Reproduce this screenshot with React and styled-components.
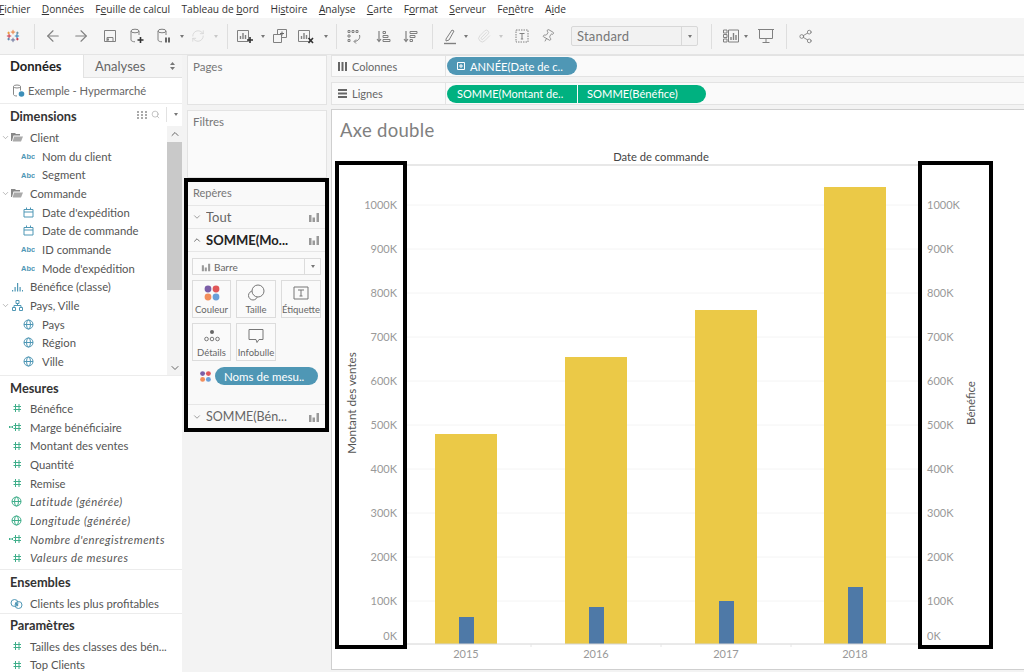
import React from "react";
import styled, { createGlobalStyle } from "styled-components";
import { ArrowLeft, ArrowRight, ChevronDown, ChevronUp, Search, Pin, Paperclip, Share2, RefreshCw } from "lucide-react";

const BOOK = `"Lato", "Open Sans", sans-serif`;

const GlobalStyle = createGlobalStyle`
  html, body { margin: 0; padding: 0; height: 100%; overflow: hidden; background: #f3f3f3; }
  * { box-sizing: border-box; }
  body { font-family: ${BOOK}; color: #555; }
`;

const menus = [
  ["F", "ichier"],
  ["D", "onnées"],
  ["Fe", "uille de calcul", 1],
  ["Tableau de ", "bord", 2],
  ["His", "toire", 1],
  ["A", "nalyse"],
  ["C", "arte"],
  ["Fo", "rmat", 1],
  ["S", "erveur"],
  ["Fen", "être", 1],
  ["Ai", "de", 1],
];

const Page = styled.div`
  width: 1024px;
  height: 672px;
  overflow: hidden;
  display: flex;
  flex-direction: column;
`;

const MenuBar = styled.div`
  height: 18px;
  background: #fff;
  display: flex;
  align-items: center;
  gap: 11.3px;
  font-family: "Open Sans", sans-serif;
  font-size: 10.2px;
  color: #333;
  margin-left: -1px;
  flex: none;
`;

const MenuItem = styled.span`
  white-space: pre;
  u { text-decoration-thickness: 1px; text-underline-offset: 1px; }
`;

const Toolbar = styled.div`
  height: 37px;
  background: #f5f5f5;
  border-bottom: 1px solid #e4e4e4;
  display: flex;
  align-items: center;
  flex: none;
`;

const Tool = styled.div`
  width: ${(p) => p.$w || 20}px;
  height: 20px;
  margin-left: ${(p) => p.$ml}px;
  display: flex;
  align-items: center;
  justify-content: center;
  color: ${(p) => (p.$off ? "#d2d2d2" : "#808080")};
  flex: none;
`;

const ToolSep = styled.div`
  width: 1px;
  height: 25px;
  margin-left: ${(p) => p.$ml}px;
  background: #dedede;
  flex: none;
`;

const Caret = styled.div`
  width: 0;
  height: 0;
  border-left: 2.5px solid transparent;
  border-right: 2.5px solid transparent;
  border-top: 3px solid ${(p) => (p.$off ? "#c8c8c8" : "#777")};
`;

const Select = styled.div`
  width: 127px;
  height: 20px;
  margin-left: 13px;
  display: flex;
  align-items: center;
  border: 1px solid #d8d8d8;
  border-radius: 2px;
  background: #f2f2f2;
  flex: none;
  font-size: 13px;
  color: #777;
  letter-spacing: 0.2px;
  span { flex: 1; padding-left: 5px; }
  i {
    width: 16px;
    height: 100%;
    border-left: 1px solid #d8d8d8;
    display: flex;
    align-items: center;
    justify-content: center;
  }
`;

const Main = styled.div`
  flex: 1;
  display: flex;
  min-height: 0;
  background: #f3f3f3;
`;

const DataPane = styled.div`
  width: 182px;
  flex: none;
  background: #fff;
  display: flex;
  flex-direction: column;
  overflow: hidden;
`;

const Tabs = styled.div`
  height: 23px;
  display: flex;
  flex: none;
`;

const Tab = styled.div`
  width: ${(p) => p.$w}px;
  display: flex;
  align-items: center;
  padding-left: ${(p) => p.$pad}px;
  padding-bottom: 1px;
  font-size: 13px;
  font-weight: ${(p) => (p.$on ? 700 : 400)};
  color: ${(p) => (p.$on ? "#222" : "#666")};
  background: ${(p) => (p.$on ? "#fff" : "#f5f5f5")};
  border-left: ${(p) => (p.$on ? "none" : "1px solid #e2e2e2")};
  border-bottom: ${(p) => (p.$on ? "none" : "1px solid #e2e2e2")};
  position: relative;
`;

const TabArrows = styled.svg`
  position: absolute;
  right: 7px;
  top: 7px;
`;

const Source = styled.div`
  height: 26px;
  display: flex;
  align-items: center;
  gap: 3px;
  padding-left: 12px;
  font-size: 11.2px;
  color: #666;
  border-bottom: 1px solid #ececec;
  flex: none;
`;

const SectionTitle = styled.div`
  height: ${(p) => p.$h || 23}px;
  padding-left: 10px;
  display: flex;
  align-items: center;
  font-size: 12.8px;
  font-weight: 700;
  color: #333;
  flex: none;
  position: relative;
`;

const HeadTools = styled.div`
  position: absolute;
  right: 4px;
  top: 3px;
  display: flex;
  align-items: center;
  gap: 4px;
  color: #999;
  em { width: 1px; height: 15px; background: #e2e2e2; margin: 0 3px 0 2px; }
`;

const ScrollWrap = styled.div`
  height: 249px;
  display: flex;
  flex: none;
  border-bottom: 1px solid #ececec;
`;

const RowList = styled.div`
  flex: 1;
  padding-top: 1px;
`;

const Row = styled.div`
  height: 18.7px;
  display: flex;
  align-items: center;
  padding-left: ${(p) => p.$pad}px;
  font-size: 11.3px;
  letter-spacing: ${(p) => (p.$it ? "0.5px" : "0")};
  color: #555;
  font-style: ${(p) => (p.$it ? "italic" : "normal")};
  white-space: nowrap;
  flex: none;
`;

const RowIcon = styled.span`
  width: 14px;
  display: flex;
  justify-content: center;
  align-items: center;
  margin-right: ${(p) => p.$gap || 7}px;
  flex: none;
  color: ${(p) => p.$c || "#4f97b5"};
`;

const Fold = styled.span`
  width: 12px;
  margin-right: -2px;
  padding-left: 1px;
  display: flex;
  color: #888;
`;

const Scrollbar = styled.div`
  width: 15px;
  margin-top: -1px;
  background: #f3f3f3;
  display: flex;
  flex-direction: column;
  align-items: center;
  color: #666;
`;

const Thumb = styled.div`
  width: 100%;
  height: 148px;
  background: #c9c9c9;
  margin: 2px 0 auto;
`;

const Section = styled.div`
  border-bottom: ${(p) => (p.$line ? "1px solid #ececec" : "none")};
  padding-bottom: ${(p) => p.$pb || 0}px;
  flex: none;
`;

const Mid = styled.div`
  width: 149px;
  flex: none;
  padding: 0 4px 0 5px;
  display: flex;
  flex-direction: column;
`;

const Card = styled.div`
  height: ${(p) => p.$h}px;
  margin-bottom: ${(p) => p.$mb}px;
  background: #fafafa;
  border: 1px solid #e3e3e3;
  padding: 4px 5px;
  font-size: 11.5px;
  color: #777;
  flex: none;
`;

const Marks = styled.div`
  height: 254px;
  margin: 0 -2px 0 -3px;
  border: 4px solid #000;
  background: #f9f9f9;
  flex: none;
  display: flex;
  flex-direction: column;
`;

const MarksTitle = styled.div`
  height: 24px;
  padding: 4px 0 0 5px;
  font-size: 11px;
  color: #777;
  border-bottom: 1px solid #e6e6e6;
  flex: none;
`;

const MarkRow = styled.div`
  height: 23px;
  display: flex;
  align-items: center;
  padding: 0 5px 0 4px;
  gap: 4px;
  font-size: ${(p) => (p.$small ? 12.5 : 13)}px;
  font-weight: ${(p) => (p.$bold ? 700 : 400)};
  color: ${(p) => (p.$bold ? "#222" : "#666")};
  border-bottom: ${(p) => (p.$line ? "1px solid #e6e6e6" : "none")};
  flex: none;
  span { flex: 1; white-space: nowrap; overflow: hidden; }
  svg { flex: none; }
`;

const MarkBody = styled.div`
  flex: 1;
  padding: 6px 4px 0 4px;
  border-bottom: 1px solid #e6e6e6;
`;

const TypeSelect = styled.div`
  height: 17px;
  display: flex;
  align-items: center;
  border: 1px solid #dcdcdc;
  background: #fbfbfb;
  font-size: 10px;
  color: #666;
  padding-left: 8px;
  gap: 3px;
  span { flex: 1; }
  i {
    width: 16px;
    height: 100%;
    border-left: 1px solid #dcdcdc;
    display: flex;
    align-items: center;
    justify-content: center;
  }
`;

const MarkGrid = styled.div`
  display: grid;
  grid-template-columns: 39px 40px 40px;
  column-gap: 5px;
  row-gap: 5px;
  margin-top: 5px;
`;

const MarkBtn = styled.div`
  height: 38px;
  border: 1px solid #dcdcdc;
  background: #fafafa;
  display: flex;
  flex-direction: column;
  align-items: center;
  justify-content: flex-end;
  gap: 2px;
  padding-bottom: 2px;
  font-size: 9.5px;
  color: #666;
  white-space: nowrap;
`;

const PillRow = styled.div`
  display: flex;
  align-items: center;
  gap: 3px;
  margin: 6px 0 0 7px;
`;

const Pill = styled.div`
  width: ${(p) => p.$w}px;
  height: 18px;
  background: ${(p) => p.$c};
  color: #fff;
  font-size: ${(p) => p.$fs || 11.2}px;
  display: flex;
  align-items: center;
  gap: 5px;
  padding-left: ${(p) => p.$pad || 0}px;
  white-space: nowrap;
  border-radius: ${(p) => p.$r || "9px"};
  flex: none;
`;

const Work = styled.div`
  flex: 1;
  min-width: 0;
  display: flex;
  flex-direction: column;
`;

const Shelf = styled.div`
  height: ${(p) => p.$h}px;
  margin-bottom: ${(p) => p.$mb}px;
  display: flex;
  align-items: center;
  background: #fafafa;
  border-top: 1px solid #e3e3e3;
  border-bottom: 1px solid #e3e3e3;
  border-left: 1px solid #e3e3e3;
  flex: none;
`;

const ShelfLabel = styled.div`
  width: 114px;
  height: 100%;
  display: flex;
  align-items: center;
  gap: 5px;
  padding-left: 6px;
  font-size: 11px;
  color: #666;
  border-right: 1px solid #e3e3e3;
  margin-right: 1px;
  flex: none;
`;

const PillGroup = styled.div`
  display: flex;
  gap: 1px;
`;

const Viz = styled.div`
  flex: 1;
  margin-bottom: 2px;
  background: #fff;
  border: 1px solid #cfcfcf;
  border-right: none;
  position: relative;
  display: flex;
  flex-direction: column;
`;

const VizTitle = styled.div`
  height: 40px;
  padding: 9px 0 0 8px;
  font-size: 18.5px;
  color: #808080;
  letter-spacing: 0.3px;
  flex: none;
`;

const Chart = styled.svg`
  flex: 1;
  width: 692px;
  display: block;
  text { font-family: ${BOOK}; }
`;

const AxisMark = styled.div`
  position: absolute;
  top: 51px;
  left: ${(p) => p.$left}px;
  width: ${(p) => p.$w}px;
  height: 488px;
  border: 4px solid #000;
  pointer-events: none;
`;

/* ---- petits pictos ---- */

const Logo = () => (
  <svg width="14" height="14" viewBox="0 0 16 16" strokeWidth="1">
    <path d="M8 1v5M5.500 3.500h5" stroke="#e8762b" />
    <path d="M8 10v5M5.500 12.500h5" stroke="#5b6591" />
    <path d="M1 8h5M3.500 5.500v5" stroke="#c72035" />
    <path d="M10 8h5M12.500 5.500v5" stroke="#1f77b4" />
    <path d="M3 3v3M1.500 4.500h3" stroke="#eb912b" />
    <path d="M13 3v3M11.500 4.500h3" stroke="#5b879b" />
    <path d="M3 10v3M1.500 11.500h3" stroke="#4e79a7" />
    <path d="M13 10v3M11.500 11.500h3" stroke="#c72035" />
  </svg>
);

const Save = () => (
  <svg width="14" height="14" viewBox="0 0 14 14" fill="none" stroke="currentColor">
    <path d="M1.500 1.500h11v11h-11z" />
    <path d="M4 12.500v-4h6v4" />
    <path d="M4 10.500h2" strokeWidth="2" />
  </svg>
);

const Db = ({ kind }) => (
  <svg width="16" height="17" viewBox="0 0 16 17" fill="none" stroke="currentColor">
    <ellipse cx="6" cy="3" rx="4" ry="1.800" />
    <path d="M2 3v9c0 1 2 1.800 4 1.800M10 3v4" />
    {kind === "new" && <path d="M11.500 9v6M8.500 12h6" stroke="#333" strokeWidth="1.600" />}
    {kind === "pause" && <path d="M10 9.500v5M13 9.500v5" stroke="#666" strokeWidth="2" />}
  </svg>
);

const Bars = ({ w = 12, h = 12, c = "currentColor" }) => (
  <svg width={w} height={h} viewBox="0 0 12 12" fill={c}>
    <path d="M1 4h2.500v7H1zM4.500 6.500H7V11H4.500zM8.500 2H11v9H8.500z" />
  </svg>
);

const Sheet = ({ kind }) => (
  <svg width="18" height="17" viewBox="0 0 18 17" fill="none" stroke="currentColor">
    <path d="M1.500 2.500h11v11h-11z" />
    <path d="M4.500 11V8M7 11V5M9.500 11V7" strokeWidth="1.400" />
    {kind === "new" && <path d="M14 9v6M11 12h6" stroke="#333" strokeWidth="1.600" />}
    {kind === "clear" && <path d="M11.500 10l4.500 5M16 10l-4.500 5" stroke="#333" strokeWidth="1.600" />}
  </svg>
);

const Dup = () => (
  <svg width="16" height="16" viewBox="0 0 16 16" fill="none" stroke="currentColor">
    <path d="M1.500 6.500h8v8h-8zM5.500 6V1.500h9v8H10" />
    <path d="M10 3.500v4M8 5.500h4" stroke="#666" />
  </svg>
);

const Swap = () => (
  <svg width="15" height="15" viewBox="0 0 15 15" fill="none" stroke="currentColor">
    <path d="M1 1.500h2v2H1zM5 1.500h2v2H5zM9 1.500h2v2H9zM1 6h2v2H1zM1 10.500h2v2H1z" />
    <path d="M12.500 6c1 3-1 6-5 6.500M9 10.500l-2 2 2 2" />
  </svg>
);

const Sort = ({ desc }) => (
  <svg width="15" height="15" viewBox="0 0 15 15" fill="none" stroke="currentColor">
    <path d="M3 2v10M1 10l2 2.500L5 10" strokeWidth="1.200" />
    {desc ? <path d="M7 2.500h7v2H7zM7 6.500h5v2H7zM7 10.500h2.500v2H7z" /> : <path d="M7 2.500h2.500v2H7zM7 6.500h5v2H7zM7 10.500h7v2H7z" />}
  </svg>
);

const Marker = () => (
  <svg width="16" height="17" viewBox="0 0 16 17" fill="none" stroke="currentColor">
    <path d="M4 11l6-9 2 1-5 9-3 1z" />
    <path d="M2 15.500h12" strokeWidth="1.400" />
  </svg>
);

const TextBox = ({ size = 14 }) => (
  <svg width={size} height={size} viewBox="0 0 14 14" fill="none" stroke="currentColor">
    <path d="M1 1h12v12H1z" strokeDasharray="1.500 1" />
    <path d="M4.500 4.500h5M7 4.500v5.500M5.800 10h2.400" />
  </svg>
);

const ShowMe = () => (
  <svg width="16" height="14" viewBox="0 0 16 14" fill="none" stroke="currentColor">
    <path d="M.5 1h3.500v3H.5zM.5 5.500h3.500v3H.5zM.5 10h3.500v3H.5zM5.500 1h10v12h-10z" />
    <path d="M8 11V8M10.500 11V4M13 11V6" strokeWidth="1.400" />
  </svg>
);

const Screen = () => (
  <svg width="18" height="16" viewBox="0 0 18 16" fill="none" stroke="currentColor">
    <path d="M1 1.500h16M2.500 1.500v9h13v-9M9 10.500v4M5.500 14.500h7" />
  </svg>
);

const TiltPin = styled(Pin)`
  transform: rotate(30deg);
`;

const DataDot = () => (
  <svg width="13" height="14" viewBox="0 0 13 14" fill="none" stroke="#888">
    <ellipse cx="5" cy="2.500" rx="3.500" ry="1.500" />
    <path d="M1.500 2.500v8c0 .8 1.500 1.500 3.500 1.500M8.500 2.500v4" />
    <circle cx="9.500" cy="10" r="2.800" fill="#3d8fb8" stroke="none" />
  </svg>
);

const FolderOpen = () => (
  <svg width="12" height="10" viewBox="0 0 12 10" fill="#888">
    <path d="M0 1h4l1 1h4v1.500H2.500L1 9H0z" />
    <path d="M3 4.500h9L10 9.500H1.700z" fill="#aaa" />
  </svg>
);

const Abc = () => (
  <svg width="14" height="8" viewBox="0 0 14 8">
    <text x="0" y="7" fontSize="7.500" fontFamily="Liberation Sans, sans-serif" fontWeight="700" fill="#4f97b5">Abc</text>
  </svg>
);

const Cal = () => (
  <svg width="11" height="11" viewBox="0 0 11 11" fill="none" stroke="#4f97b5">
    <path d="M1 2.500h9v7.500H1zM1 5h9" />
    <path d="M3.500 .500v2M7.500 .500v2" />
  </svg>
);

const Globe = ({ c = "#4f97b5" }) => (
  <svg width="11" height="11" viewBox="0 0 11 11" fill="none" stroke={c}>
    <circle cx="5.500" cy="5.500" r="4.500" />
    <path d="M1 5.500h9" />
    <ellipse cx="5.500" cy="5.500" rx="2" ry="4.500" />
  </svg>
);

const Bins = () => (
  <svg width="12" height="10" viewBox="0 0 12 10" fill="#4f97b5">
    <path d="M1 8h1.200v1.500H1zM3.500 5h1.200v4.500H3.500zM6 1h1.200v8.500H6zM8.500 5h1.200v4.500H8.500zM11 8h1v1.500h-1z" />
  </svg>
);

const Hier = () => (
  <svg width="11" height="11" viewBox="0 0 11 11" fill="none" stroke="#4f97b5">
    <path d="M4 .500h3v3H4zM.500 7.500h3v3h-3zM7.500 7.500h3v3h-3zM5.500 3.500v2M2 7.500v-2h7v2" />
  </svg>
);

const Hash = ({ bin }) => (
  <svg width="14" height="10" viewBox="0 0 14 10" fill="none" stroke="#3fae8a">
    <path d="M6.500 1v8M10 1v8M4.500 3.500h7.500M4.500 6.500h7.500" />
    {bin && <path d="M0 5h1.500M2.500 5H4" strokeWidth="2" />}
  </svg>
);

const SetIcon = () => (
  <svg width="13" height="12" viewBox="0 0 13 12" fill="none" stroke="#4f97b5">
    <circle cx="4.500" cy="5" r="3.500" />
    <circle cx="8.500" cy="7" r="3.500" />
    <path d="M6 4l2.500 3-1 1.500L5 6z" fill="#4f97b5" stroke="none" />
  </svg>
);

const Dots = ({ size = 18 }) => (
  <svg width={size} height={size} viewBox="0 0 18 18">
    <circle cx="5" cy="5" r="3.400" fill="#7b5ea7" />
    <circle cx="13" cy="5" r="3.400" fill="#e15759" />
    <circle cx="5" cy="13" r="3.400" fill="#f28e5c" />
    <circle cx="13" cy="13" r="3.400" fill="#6a9fd8" />
  </svg>
);

const SizeIcon = () => (
  <svg width="18" height="18" viewBox="0 0 18 18" fill="none" stroke="#777">
    <circle cx="6" cy="11.500" r="4.500" />
    <circle cx="11" cy="7" r="6" fill="#fafafa" />
  </svg>
);

const LabelIcon = () => (
  <svg width="18" height="18" viewBox="0 0 18 18" fill="none" stroke="#777">
    <path d="M2 3h14v12H2z" />
    <path d="M6 6h6M9 6v6M7.500 12h3" />
  </svg>
);

const DetailIcon = () => (
  <svg width="18" height="18" viewBox="0 0 18 18" fill="none" stroke="#777">
    <circle cx="9" cy="5" r="2" fill="#666" stroke="none" />
    <circle cx="3.500" cy="12" r="1.800" />
    <circle cx="9" cy="12" r="1.800" />
    <circle cx="14.500" cy="12" r="1.800" />
  </svg>
);

const TipIcon = () => (
  <svg width="18" height="18" viewBox="0 0 18 18" fill="none" stroke="#777">
    <path d="M2 2.500h14v10h-4l-2 3-1-3H2z" />
  </svg>
);

/* ---- données ---- */

const tools = [
  { ml: 3, el: <Logo /> },
  { sep: 11 },
  { ml: 8, el: <ArrowLeft size={18} strokeWidth={1.5} /> },
  { ml: 8, el: <ArrowRight size={18} strokeWidth={1.5} /> },
  { ml: 9, el: <Save /> },
  { ml: 7, el: <Db kind="new" /> },
  { ml: 7, el: <Db kind="pause" /> },
  { ml: 4, caret: true },
  { ml: 2, off: true, el: <RefreshCw size={14} strokeWidth={1.3} /> },
  { ml: 4, caret: true, off: true },
  { sep: 7 },
  { ml: 7, el: <Sheet kind="new" /> },
  { ml: 4, caret: true },
  { ml: 3, el: <Dup /> },
  { ml: 6, el: <Sheet kind="clear" /> },
  { ml: 6, caret: true },
  { sep: 6 },
  { ml: 7, el: <Swap /> },
  { ml: 9, el: <Sort /> },
  { ml: 7, el: <Sort desc /> },
  { sep: 12 },
  { ml: 7, el: <Marker /> },
  { ml: 2, caret: true },
  { ml: 4, off: true, el: <Paperclip size={14} strokeWidth={1.3} /> },
  { ml: 3, caret: true, off: true },
  { ml: 7, el: <TextBox /> },
  { ml: 6, el: <TiltPin size={14} strokeWidth={1.3} /> },
  { select: true },
  { sep: 13 },
  { ml: 9, el: <ShowMe /> },
  { ml: 1, caret: true },
  { ml: 6, el: <Screen /> },
  { sep: 10 },
  { ml: 8, el: <Share2 size={15} strokeWidth={1.4} /> },
];

const dimensions = [
  { label: "Client", folder: true, icon: <FolderOpen /> },
  { label: "Nom du client", icon: <Abc /> },
  { label: "Segment", icon: <Abc /> },
  { label: "Commande", folder: true, icon: <FolderOpen /> },
  { label: "Date d'expédition", icon: <Cal /> },
  { label: "Date de commande", icon: <Cal /> },
  { label: "ID commande", icon: <Abc /> },
  { label: "Mode d'expédition", icon: <Abc /> },
  { label: "Bénéfice (classe)", top: true, icon: <Bins /> },
  { label: "Pays, Ville", folder: true, icon: <Hier /> },
  { label: "Pays", icon: <Globe /> },
  { label: "Région", icon: <Globe /> },
  { label: "Ville", icon: <Globe /> },
];

const measures = [
  { label: "Bénéfice", icon: <Hash /> },
  { label: "Marge bénéficiaire", icon: <Hash bin /> },
  { label: "Montant des ventes", icon: <Hash /> },
  { label: "Quantité", icon: <Hash /> },
  { label: "Remise", icon: <Hash /> },
  { label: "Latitude (générée)", it: true, icon: <Globe c="#3fae8a" /> },
  { label: "Longitude (générée)", it: true, icon: <Globe c="#3fae8a" /> },
  { label: "Nombre d'enregistrements", it: true, icon: <Hash bin /> },
  { label: "Valeurs de mesures", it: true, icon: <Hash /> },
];

const years = [
  { year: 2015, x: 435, sales: 434, profit: 617 },
  { year: 2016, x: 565, sales: 357, profit: 607 },
  { year: 2017, x: 695, sales: 310, profit: 601 },
  { year: 2018, x: 824, sales: 187, profit: 587 },
];

const ticks = [1000, 900, 800, 700, 600, 500, 400, 300, 200, 100];

function DimRow({ item }) {
  if (item.folder || item.top) {
    return (
      <Row $pad={0}>
        <Fold>{item.folder && <ChevronDown size={9} strokeWidth={1.5} />}</Fold>
        <RowIcon $gap={6}>{item.icon}</RowIcon>
        {item.label}
      </Row>
    );
  }
  return (
    <Row $pad={21}>
      <RowIcon>{item.icon}</RowIcon>
      {item.label}
    </Row>
  );
}

function MeasureRow({ label, it, icon }) {
  return (
    <Row $pad={9} $it={it}>
      <RowIcon>{icon}</RowIcon>
      {label}
    </Row>
  );
}

export default function App() {
  return (
    <Page>
      <GlobalStyle />
      <MenuBar>
        {menus.map(([a, b, und]) => (
          <MenuItem key={a + b}>
            {und === 2 ? (
              <>
                {a}
                <u>{b[0]}</u>
                {b.slice(1)}
              </>
            ) : und === 1 ? (
              <>
                {a.slice(0, -1)}
                <u>{a.slice(-1)}</u>
                {b}
              </>
            ) : (
              <>
                <u>{a}</u>
                {b}
              </>
            )}
          </MenuItem>
        ))}
      </MenuBar>

      <Toolbar>
        {tools.map((t, i) => {
          if (t.sep) return <ToolSep key={i} $ml={t.sep} />;
          if (t.select)
            return (
              <Select key={i}>
                <span>Standard</span>
                <i>
                  <Caret />
                </i>
              </Select>
            );
          if (t.caret)
            return (
              <Tool key={i} $w={8} $ml={t.ml}>
                <Caret $off={t.off} />
              </Tool>
            );
          return (
            <Tool key={i} $ml={t.ml} $off={t.off}>
              {t.el}
            </Tool>
          );
        })}
      </Toolbar>

      <Main>
        <DataPane>
          <Tabs>
            <Tab $w={83} $pad={10} $on>
              Données
            </Tab>
            <Tab $w={99} $pad={11}>
              Analyses
              <TabArrows width="5" height="8" viewBox="0 0 5 8" fill="#777">
                <path d="M2.500 0L5 3H0zM0 5h5L2.500 8z" />
              </TabArrows>
            </Tab>
          </Tabs>
          <Source>
            <DataDot />
            Exemple - Hypermarché
          </Source>
          <SectionTitle>
            Dimensions
            <HeadTools>
              <svg width="10" height="8" viewBox="0 0 10 8" fill="#aaa">
                <path d="M0 0h2v2H0zM4 0h2v2H4zM8 0h2v2H8zM0 3h2v2H0zM4 3h2v2H4zM8 3h2v2H8zM0 6h2v2H0zM4 6h2v2H4zM8 6h2v2H8z" />
              </svg>
              <Search size={9} strokeWidth={1.5} />
              <em />
              <Caret />
            </HeadTools>
          </SectionTitle>
          <ScrollWrap>
            <RowList>
              {dimensions.map((d) => (
                <DimRow key={d.label} item={d} />
              ))}
            </RowList>
            <Scrollbar>
              <ChevronUp size={12} strokeWidth={2} style={{ marginTop: 2 }} />
              <Thumb />
              <ChevronDown size={12} strokeWidth={2} style={{ marginBottom: 1 }} />
            </Scrollbar>
          </ScrollWrap>
          <Section $line $pb={2}>
            <SectionTitle>Mesures</SectionTitle>
            {measures.map((m) => (
              <MeasureRow key={m.label} {...m} />
            ))}
          </Section>
          <Section $line>
            <SectionTitle $h={24}>Ensembles</SectionTitle>
            <MeasureRow label="Clients les plus profitables" icon={<SetIcon />} />
          </Section>
          <Section>
            <SectionTitle>Paramètres</SectionTitle>
            <MeasureRow label="Tailles des classes des bén..." icon={<Hash />} />
            <MeasureRow label="Top Clients" icon={<Hash />} />
          </Section>
        </DataPane>

        <Mid>
          <Card $h={50} $mb={5}>
            Pages
          </Card>
          <Card $h={68} $mb={0}>
            Filtres
          </Card>
          <Marks>
            <MarksTitle>Repères</MarksTitle>
            <MarkRow $line>
              <ChevronDown size={10} strokeWidth={1.5} />
              <span>Tout</span>
              <Bars c="#999" />
            </MarkRow>
            <MarkRow $bold $line>
              <ChevronUp size={10} strokeWidth={1.5} />
              <span>SOMME(Mo...</span>
              <Bars c="#999" />
            </MarkRow>
            <MarkBody>
              <TypeSelect>
                <Bars w={10} h={10} c="#999" />
                <span>Barre</span>
                <i>
                  <Caret />
                </i>
              </TypeSelect>
              <MarkGrid>
                <MarkBtn>
                  <Dots />
                  Couleur
                </MarkBtn>
                <MarkBtn>
                  <SizeIcon />
                  Taille
                </MarkBtn>
                <MarkBtn>
                  <LabelIcon />
                  Étiquette
                </MarkBtn>
                <MarkBtn>
                  <DetailIcon />
                  Détails
                </MarkBtn>
                <MarkBtn>
                  <TipIcon />
                  Infobulle
                </MarkBtn>
              </MarkGrid>
              <PillRow>
                <Dots size={13} />
                <Pill $w={103} $c="#4f97b5" $pad={9} $fs={11.5}>
                  Noms de mesu..
                </Pill>
              </PillRow>
            </MarkBody>
            <MarkRow $small>
              <ChevronDown size={10} strokeWidth={1.5} />
              <span>SOMME(Bén...</span>
              <Bars c="#999" />
            </MarkRow>
          </Marks>
        </Mid>

        <Work>
          <Shelf $h={22} $mb={5}>
            <ShelfLabel>
              <svg width="9" height="9" viewBox="0 0 9 9" fill="#666">
                <path d="M0 0h2v9H0zM3.500 0h2v9h-2zM7 0h2v9H7z" />
              </svg>
              Colonnes
            </ShelfLabel>
            <Pill $w={130} $c="#4f97b5" $pad={10}>
              <svg width="8" height="8" viewBox="0 0 8 8" fill="none" stroke="#fff">
                <path d="M.5.500h7v7h-7zM2 4h4M4 2v4" />
              </svg>
              ANNÉE(Date de c..
            </Pill>
          </Shelf>
          <Shelf $h={23} $mb={4}>
            <ShelfLabel>
              <svg width="9" height="9" viewBox="0 0 9 9" fill="#666">
                <path d="M0 0h9v2H0zM0 3.500h9v2H0zM0 7h9v2H0z" />
              </svg>
              Lignes
            </ShelfLabel>
            <PillGroup>
              <Pill $w={130} $c="#00b180" $pad={10} $r="9px 0 0 9px" $fs={11}>
                SOMME(Montant de..
              </Pill>
              <Pill $w={128} $c="#00b180" $pad={9} $r="0 9px 9px 0">
                SOMME(Bénéfice)
              </Pill>
            </PillGroup>
          </Shelf>
          <Viz>
            <VizTitle>Axe double</VizTitle>
            <Chart viewBox="332 150 692 519" preserveAspectRatio="xMinYMin">
              <text x="661" y="161" textAnchor="middle" fontSize="11.2" fill="#444">
                Date de commande
              </text>
              <rect x="405" y="164" width="514" height="2" fill="#e8e8e8" />
              {ticks.map((t, i) => {
                const y = 205 + i * 44;
                return (
                  <g key={t}>
                    <line x1="405" x2="919" y1={y} y2={y} stroke="#f4f4f4" />
                    <text x="397" y={y + 4} textAnchor="end" fontSize="11" fill="#999">
                      {t}K
                    </text>
                    <text x="927" y={y + 4} fontSize="11" fill="#999">
                      {t}K
                    </text>
                  </g>
                );
              })}
              <text x="397" y="640" textAnchor="end" fontSize="11" fill="#999">
                0K
              </text>
              <text x="927" y="640" fontSize="11" fill="#999">
                0K
              </text>
              {years.map((b) => (
                <g key={b.year}>
                  <rect x={b.x} y={b.sales} width="62" height={644 - b.sales} fill="#ebc947" />
                  <rect x={b.x + 24} y={b.profit} width="15" height={644 - b.profit} fill="#4e79a7" />
                  <text x={b.x + 31} y="658" textAnchor="middle" fontSize="11" fill="#999">
                    {b.year}
                  </text>
                </g>
              ))}
              <line x1="405" x2="919" y1="644" y2="644" stroke="#d4d4d4" />
              {[531, 661, 791].map((x) => (
                <line key={x} x1={x} x2={x} y1="644" y2="647" stroke="#e4e4e4" />
              ))}
              <text transform="translate(356 403) rotate(-90)" textAnchor="middle" fontSize="11.7" fill="#555">
                Montant des ventes
              </text>
              <text transform="translate(975 403) rotate(-90)" textAnchor="middle" fontSize="11.5" fill="#555">
                Bénéfice
              </text>
            </Chart>
            <AxisMark $left={3} $w={72} />
            <AxisMark $left={586} $w={75} />
          </Viz>
        </Work>
      </Main>
    </Page>
  );
}
